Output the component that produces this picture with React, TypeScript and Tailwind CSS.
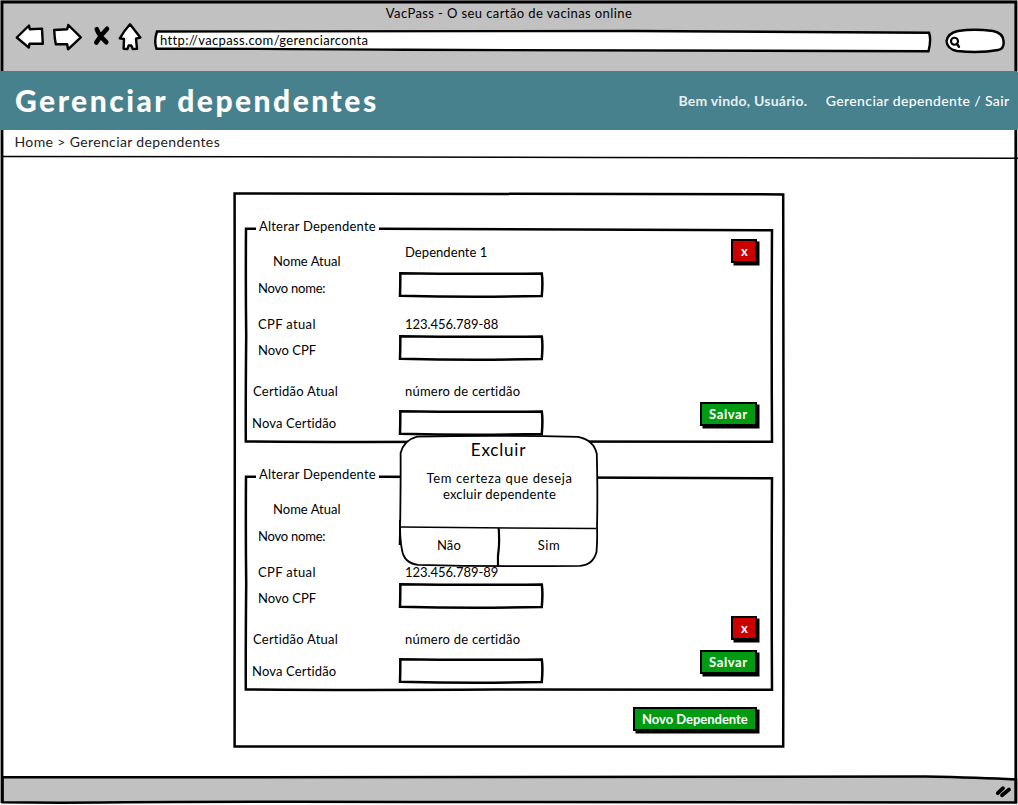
import type { ReactNode } from "react";

type StrokeProps = { w: number; h: number; d: string; width?: number; fill?: string };

function Sketch({ w, h, d, width = 2.5, fill = "none" }: StrokeProps) {
  return (
    <svg
      className="pointer-events-none absolute top-0 left-0 overflow-visible"
      width={w}
      height={h}
      viewBox={`0 0 ${w} ${h}`}
      fill={fill}
      stroke="#000"
      strokeWidth={width}
      strokeLinejoin="miter"
      strokeLinecap="butt"
      aria-hidden="true"
    >
      <path d={d} />
    </svg>
  );
}

function NavIcons() {
  return (
    <svg className="ml-[13px] mt-[21px] shrink-0" width="127" height="28" viewBox="15 23 127 28" stroke="#000" strokeWidth="2.4" strokeLinejoin="round" strokeLinecap="round" fill="#fff">
      <path d="M16.8 37.5 29 25.5 29.8 29.3 42 28.6 42.8 43.8 29.5 43.8 28.8 47.6Z" />
      <path d="M54.2 30 67.2 29.2 68.3 25 80.8 37.3 68 49.3 67.2 44.2 55.8 44.2 54.8 38Z" />
      <path d="M96.8 29.2Q98.5 35 106.3 42.2M107 28.8Q101.5 34 96.3 42.5" strokeWidth="4.6" fill="none" />
      <path d="M130 24.3 140.3 37.5 136 38.7 137 48.8 132.8 49 131.3 45.5 128.6 45.5 127.5 49 123.6 48.8 124 39 119.8 38.3Q124 31 130 24.3Z" />
    </svg>
  );
}

function TextInput() {
  return (
    <div className="relative h-[25px] w-[144px] bg-white">
      <Sketch w={144} h={25} d="M1.3 1.2Q72 2.4 142.8 1.4Q144 10 142.8 24Q72 25.4 1 23.8Q1.4 12 1.3 1.2Z" />
      <input className="relative h-full w-full bg-transparent px-2 font-['Lato',sans-serif] text-[13px] outline-none" />
    </div>
  );
}

function ActionButton({ className, children }: { className: string; children: ReactNode }) {
  return (
    <button
      className={`block h-[24px] border-2 border-black text-left font-bold leading-[19px] text-white shadow-[2.5px_2.5px_0_0_#000] ${className}`}
    >
      {children}
    </button>
  );
}

function SaveButton({ className }: { className: string }) {
  return (
    <ActionButton className={`w-[57px] bg-[#009a13] pl-[7px] tracking-[0.62px] ${className}`}>
      Salvar
    </ActionButton>
  );
}

function DeleteButton({ className }: { className: string }) {
  return (
    <ActionButton className={`w-[26px] bg-[#cc0000] pl-[8px] ${className}`}>
      x
    </ActionButton>
  );
}

type DependentProps = { name?: string; cpf: string; deleteAtTop?: boolean };

function DependentForm({ name, cpf, deleteAtTop }: DependentProps) {
  return (
    <section className="relative flex h-[248px] w-[531px] shrink-0 leading-5">
      <Sketch
        w={531}
        h={248}
        d="M11 12.8 1 12.8Q0.6 70 1.2 120Q0.6 180 0.8 225.5Q100 226.4 250 225.6Q400 225.5 527 225.8Q526.4 120 527 14.2Q300 13.6 134 12.8"
      />
      <div className="w-[154px] shrink-0 whitespace-nowrap">
        <h2 className="h-5 pl-[14px] tracking-[0.21px]">Alterar Dependente</h2>
        <p className="mt-[15px] h-5 pl-[28px] tracking-[0.02px]">Nome Atual</p>
        <p className="mt-[7px] h-5 pl-[13px] tracking-[-0.22px]">Novo nome:</p>
        <p className="mt-4 h-5 pl-[13px] tracking-[0.35px]">CPF atual</p>
        <p className="mt-[6px] h-5 pl-[13px] tracking-[0.02px]">Novo CPF</p>
        <p className="mt-[21px] h-5 pl-[8px] tracking-[0.23px]">Certidão Atual</p>
        <p className="mt-3 h-5 pl-[7px] tracking-[0.16px]">Nova Certidão</p>
      </div>
      <div className="w-[280px] shrink-0 whitespace-nowrap">
        <p className="mt-[26px] h-5 pl-[6px] tracking-[0.06px]">{name}</p>
        <div className="mt-[10px]">
          <TextInput />
        </div>
        <p className="mt-[17px] h-5 pl-[6px] tracking-[-0.05px]">{cpf}</p>
        <div className="mt-[1px]">
          <TextInput />
        </div>
        <p className="mt-[21px] h-5 pl-[6px] tracking-[0.22px]">número de certidão</p>
        <div className="mt-[9px]">
          <TextInput />
        </div>
      </div>
      <div className="flex flex-1 flex-col items-end pr-[19px]">
        <DeleteButton className={deleteAtTop ? "mt-[23px]" : "mt-[152px]"} />
        <SaveButton className={deleteAtTop ? "mt-[139px]" : "mt-[10px]"} />
      </div>
    </section>
  );
}

function ConfirmDialog() {
  return (
    <div role="dialog" className="absolute top-[243px] left-[166px] flex h-[131px] w-[198px] flex-col text-center">
      <Sketch
        w={198}
        h={131}
        width={1.8}
        fill="#fff"
        d="M17 0.6Q95 -0.9 178 0.8Q194 4 196.8 18Q197.8 60 197 90Q197.5 105 196.5 116Q193 129 180 129.8Q95 131 18 128.8Q4 127 2 114Q-0.4 102 0.2 85Q0.8 40 0.6 17Q4 4 17 0.6Z"
      />
      <Sketch w={198} h={131} width={1.5} d="M1 91Q100 91.8 196 92.6" />
      <Sketch w={198} h={131} width={2.2} d="M98.7 92Q99.5 105 98.8 112Q97.5 120 98 130" />
      <h2 className="relative mt-[2px] h-6 pr-px text-[17px] leading-6 tracking-[0.8px]">Excluir</h2>
      <div className="relative mt-[8px] h-[60px] pl-px leading-4">
        <p className="tracking-[0.6px]">Tem certeza que deseja</p>
        <p className="tracking-[0.25px]">excluir dependente</p>
      </div>
      <div className="relative mt-[5px] flex h-5 leading-5">
        <button className="h-5 w-[98px] tracking-[0.22px]">Não</button>
        <button className="h-5 flex-1 pl-[2px] tracking-[0.6px]">Sim</button>
      </div>
    </div>
  );
}

export default function App() {
  return (
    <div className="relative flex h-[805px] w-[1018px] flex-col overflow-hidden bg-white font-['Lato',sans-serif] text-[13px] text-black">
      <header className="h-[71px] shrink-0 bg-[#c1c1c1] px-[2px] pt-[2px]">
        <div className="h-0 text-center leading-[22px] tracking-[0.4px]">
          VacPass - O seu cartão de vacinas online
        </div>
        <div className="flex items-start">
          <NavIcons />
          <div className="relative mt-[28px] ml-[11.5px] h-[22px] w-[777px] shrink-0">
            <Sketch
              w={777}
              h={22}
              fill="#fff"
              width={2.4}
              d="M3 1.5Q250 0.8 480 1Q620 2 775 2.8Q777.5 9 774.5 21.2Q500 20.5 250 19.8Q100 18.5 2.5 18.8Q-0.3 11 3 1.5Z"
            />
            <span className="relative block pl-[6.5px] leading-5 tracking-[0.35px]">http://vacpass.com/gerenciarconta</span>
          </div>
          <svg className="mt-[26px] ml-[13.5px] shrink-0" width="62" height="26" viewBox="944 28 62 26" fill="#fff" stroke="#000" strokeWidth="2.4" strokeLinecap="round">
            <path d="M958 31Q974 28.5 993 31Q1003 33 1003.5 41Q1004.5 49 998 50Q980 53.5 957 51Q947 49 946.5 41Q948 33 958 31Z" />
            <circle cx="954.5" cy="41.3" r="3.5" strokeWidth="2.1" />
            <path d="M957.3 44.5 959 46.8" strokeWidth="2.4" />
          </svg>
        </div>
      </header>

      <div className="relative z-10 flex h-[59px] shrink-0 items-center rounded-r-[2px] bg-[#47818e] text-white">
        <h1 className="flex-1 pb-px pl-[15px] text-[30px] font-black leading-none tracking-[2.5px]">Gerenciar dependentes</h1>
        <p className="mr-[18.5px] text-[14px] font-bold tracking-[0.24px] text-[#e8eeef]">Bem vindo, Usuário.</p>
        <nav className="mr-[8.5px] text-[14px] font-medium tracking-[0.38px]">Gerenciar dependente / Sair</nav>
      </div>

      <div className="relative h-[28px] shrink-0 pl-[14.5px] text-[14px] leading-[23px] tracking-[0.37px] text-[#222]">
        Home &gt; Gerenciar dependentes
        <Sketch w={1018} h={28} width={1.5} d="M3 26.4Q300 27.2 600 27.4L1018 28.3" />
      </div>

      <main className="flex-1 pt-[35px] pl-[234px]">
        <div className="relative flex h-[555px] w-[551px] flex-col pt-[23px] pl-[11px]">
          <Sketch
            w={551}
            h={555}
            d="M0.6 0.6Q200 1.4 400 1L549.2 1.4Q549 200 549.6 300L549.2 553.6Q300 552.6 0.6 553.4Q0.2 400 0.8 250Z"
          />
          <DependentForm name="Dependente 1" cpf="123.456.789-88" deleteAtTop />
          <DependentForm cpf="123.456.789-89" />
          <ActionButton className="ml-[388px] mt-[-5px] w-[124px] bg-[#009a13] pl-[7px] tracking-[-0.02px]">
            Novo Dependente
          </ActionButton>
          <ConfirmDialog />
        </div>
      </main>

      <footer className="relative flex h-[28px] shrink-0 items-start justify-end pr-[6px]">
        <Sketch
          w={1018}
          h={28}
          fill="#c1c1c1"
          d="M2.5 0.3Q200 1 500 0L925 -0.4Q980 0.6 1016 2.6L1016 25.5Q700 26 450 25Q200 24.2 60 25.8L2.5 25.2Z"
        />
        <svg className="relative mt-[8px]" width="17" height="14" viewBox="0 0 17 14" stroke="#000" strokeWidth="3.8" strokeLinecap="round">
          <path d="M2.8 8.2 8 3.2M7 10.2 14 4.6" />
        </svg>
      </footer>

      <Sketch w={1018} h={805} width={2.8} d="M2 803V2H1015.8V803" />
    </div>
  );
}
